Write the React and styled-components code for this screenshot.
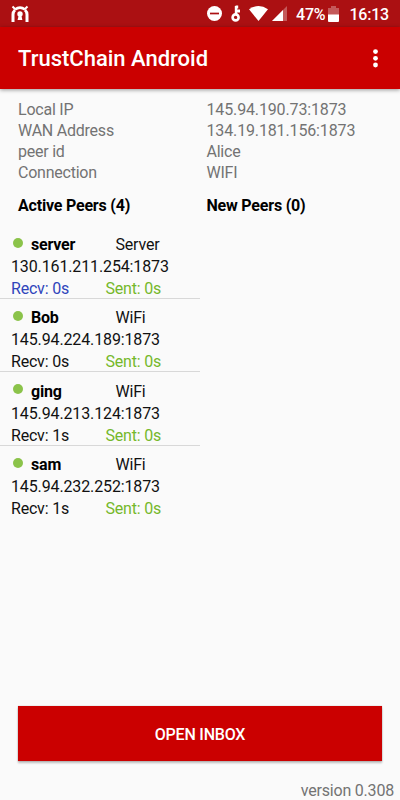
import styled, { createGlobalStyle } from 'styled-components';

const GlobalStyle = createGlobalStyle`
  body {
    margin: 0;
    background: #fafafa;
    font-family: Roboto, sans-serif;
    color: #000;
  }
`;

const Screen = styled.div`
  display: flex;
  flex-direction: column;
  width: 400px;
  height: 800px;
  overflow: hidden;
  background: #fafafa;
`;

const StatusBar = styled.header`
  display: flex;
  align-items: center;
  justify-content: space-between;
  height: 27px;
  flex: none;
  box-sizing: border-box;
  padding: 0 11px 0 11px;
  background: #ab1012;
  color: #fff;
`;

const StatusIcons = styled.div`
  display: flex;
  align-items: center;
`;

const StatusText = styled.span`
  font-size: 16px;
  letter-spacing: -0.2px;
  line-height: 25px;
  padding-top: 2px;
  font-weight: 500;
  margin-left: ${(p) => p.$gap}px;
`;

const Icon = styled.svg`
  display: block;
  flex: none;
  margin-left: ${(p) => p.$gap || 0}px;
`;

const AppBar = styled.div`
  display: flex;
  align-items: center;
  justify-content: space-between;
  height: 62px;
  flex: none;
  box-sizing: border-box;
  padding: 0 22px 0 18px;
  background: #cb0000;
  box-shadow: 0 1px 4px rgba(0, 0, 0, 0.4);
`;

const Title = styled.h1`
  margin: 0;
  padding-top: 1px;
  color: #fff;
  font-size: 22px;
  font-weight: 500;
`;

const Info = styled.dl`
  display: grid;
  grid-template-columns: 188.5px 1fr;
  margin: 0;
  padding: 10px 0 0 18px;
  font-size: 16px;
  letter-spacing: -0.23px;
  line-height: 21px;
  color: #737373;
`;

const InfoLabel = styled.dt`
  margin: 0;
`;

const InfoValue = styled.dd`
  margin: 0;
  letter-spacing: ${(p) => (p.$numeric ? -0.14 : -0.23)}px;
`;

const PeerHeads = styled.div`
  display: grid;
  grid-template-columns: 188.5px 1fr;
  padding: 12px 0 0 18px;
`;

const PeerHead = styled.h2`
  margin: 0;
  font-size: 16px;
  letter-spacing: -0.2px;
  line-height: 21px;
  font-weight: 700;
`;

const PeerList = styled.ul`
  list-style: none;
  margin: 9.7px 0 0;
  padding: 0;
  width: 200px;
  font-size: 16px;
  letter-spacing: -0.2px;
  color: #111;
`;

const Peer = styled.li`
  box-sizing: border-box;
  height: 73.4px;
  padding: 8.3px 0 0 11px;
  border-bottom: 1px solid ${(p) => (p.$last ? 'transparent' : '#d8d8d8')};
`;

const PeerRow = styled.div`
  display: grid;
  grid-template-columns: ${(p) => p.$columns};
  line-height: ${(p) => p.$height || 21}px;
`;

const Address = styled(PeerRow)`
  letter-spacing: -0.13px;
`;

const Dot = styled.span`
  width: 10px;
  height: 10px;
  margin: 3.6px 0 0 1.6px;
  border-radius: 50%;
  background: #8bc34a;
`;

const PeerName = styled.span`
  font-weight: 700;
  color: #000;
`;

const Traffic = styled.span`
  color: ${(p) => p.$color};
`;

const Footer = styled.footer`
  margin-top: auto;
  display: flex;
  flex-direction: column;
`;

const InboxButton = styled.button`
  height: 55px;
  margin: 0 18px;
  border: none;
  padding: 1px 0 0;
  background: #cb0000;
  color: #fff;
  font: 500 16px Roboto, sans-serif;
  letter-spacing: -0.2px;
  box-shadow: 0 2px 2px rgba(0, 0, 0, 0.25), 0 0 1px rgba(0, 0, 0, 0.3);
`;

const Version = styled.span`
  align-self: flex-end;
  margin: 20px 6px 0 0;
  font-size: 16px;
  letter-spacing: -0.2px;
  line-height: 19px;
  color: #737373;
`;

const info = [
  { label: 'Local IP', value: '145.94.190.73:1873', numeric: true },
  { label: 'WAN Address', value: '134.19.181.156:1873', numeric: true },
  { label: 'peer id', value: 'Alice' },
  { label: 'Connection', value: 'WIFI' },
];

const peers = [
  { name: 'server', type: 'Server', address: '130.161.211.254:1873', recv: '0s', sent: '0s', recvColor: '#2f45bb' },
  { name: 'Bob', type: 'WiFi', address: '145.94.224.189:1873', recv: '0s', sent: '0s' },
  { name: 'ging', type: 'WiFi', address: '145.94.213.124:1873', recv: '1s', sent: '0s' },
  { name: 'sam', type: 'WiFi', address: '145.94.232.252:1873', recv: '1s', sent: '0s' },
];

function AppIcon() {
  return (
    <Icon width="18" height="18" viewBox="0 0 18 18" fill="none" stroke="#fff">
      <path d="M1.5 1.5l2.8 2.7M16.5 1.5l-2.8 2.7" strokeWidth="2" />
      <path d="M4 4.5Q9 .8 14 4.5" strokeWidth="2.6" />
      <path d="M2 17V9.5Q2 6.8 4 5M16 17V9.5Q16 6.8 14 5" strokeWidth="3" />
      <circle cx="9" cy="9" r="2.7" fill="#fff" stroke="none" />
      <path d="M7.8 10h2.4l1.2 5H6.6z" fill="#fff" stroke="none" />
    </Icon>
  );
}

function DoNotDisturbIcon() {
  return (
    <Icon width="15" height="15" viewBox="0 0 15 15">
      <circle cx="7.5" cy="7.5" r="7.5" fill="#fff" />
      <path d="M3 7.5h9" stroke="#ab1012" strokeWidth="1.7" />
    </Icon>
  );
}

function KeyIcon() {
  return (
    <Icon $gap={9} width="10" height="17" viewBox="0 0 10 17" fill="none" stroke="#fff">
      <circle cx="4.6" cy="12.4" r="3" strokeWidth="2.6" />
      <path d="M5 9.5V1" strokeWidth="2.4" />
      <path d="M4.6 2h2.6M5 6h4" strokeWidth="3" />
    </Icon>
  );
}

function WifiIcon() {
  return (
    <Icon $gap={8} width="19" height="15" viewBox="0 0 19 15">
      <path d="M0 3.3Q9.5-3.3 19 3.3L9.5 15z" fill="#fff" />
    </Icon>
  );
}

function SignalIcon() {
  return (
    <Icon $gap={4} width="15" height="15" viewBox="0 0 15 15">
      <path d="M0 15L15 0v15z" fill="#fff" fillOpacity="0.3" />
      <path d="M0 15L11 4v11z" fill="#fff" />
    </Icon>
  );
}

function BatteryIcon() {
  return (
    <Icon $gap={3} width="11" height="16" viewBox="0 0 11 16" fill="#fff">
      <path d="M3 0h5v2h3v7H0V2h3z" fillOpacity="0.3" />
      <path d="M0 8.5h11V15q0 1-1 1H1q-1 0-1-1z" />
    </Icon>
  );
}

export default function App() {
  return (
    <Screen>
      <GlobalStyle />
      <StatusBar>
        <AppIcon />
        <StatusIcons>
          <DoNotDisturbIcon />
          <KeyIcon />
          <WifiIcon />
          <SignalIcon />
          <StatusText $gap={9}>47%</StatusText>
          <BatteryIcon />
          <StatusText $gap={10}>16:13</StatusText>
        </StatusIcons>
      </StatusBar>
      <AppBar>
        <Title>TrustChain Android</Title>
        <Icon width="5" height="19" viewBox="0 0 5 19" fill="#fff">
          <circle cx="2.5" cy="2.6" r="2.4" />
          <circle cx="2.5" cy="9.3" r="2.4" />
          <circle cx="2.5" cy="16" r="2.4" />
        </Icon>
      </AppBar>
      <Info>
        {info.map((item) => [
          <InfoLabel key={item.label}>{item.label}</InfoLabel>,
          <InfoValue key={item.value} $numeric={item.numeric}>{item.value}</InfoValue>,
        ])}
      </Info>
      <PeerHeads>
        <PeerHead>Active Peers (4)</PeerHead>
        <PeerHead>New Peers (0)</PeerHead>
      </PeerHeads>
      <PeerList>
        {peers.map((peer, i) => (
          <Peer key={peer.name} $last={i === peers.length - 1}>
            <PeerRow $columns="20px 84.5px 1fr">
              <Dot />
              <PeerName>{peer.name}</PeerName>
              <span>{peer.type}</span>
            </PeerRow>
            <Address $columns="1fr" $height={24}>{peer.address}</Address>
            <PeerRow $columns="94.5px 1fr" $height={19}>
              <Traffic $color={peer.recvColor || '#111'}>Recv: {peer.recv}</Traffic>
              <Traffic $color="#75b82a">Sent: {peer.sent}</Traffic>
            </PeerRow>
          </Peer>
        ))}
      </PeerList>
      <Footer>
        <InboxButton>OPEN INBOX</InboxButton>
        <Version>version 0.308</Version>
      </Footer>
    </Screen>
  );
}
